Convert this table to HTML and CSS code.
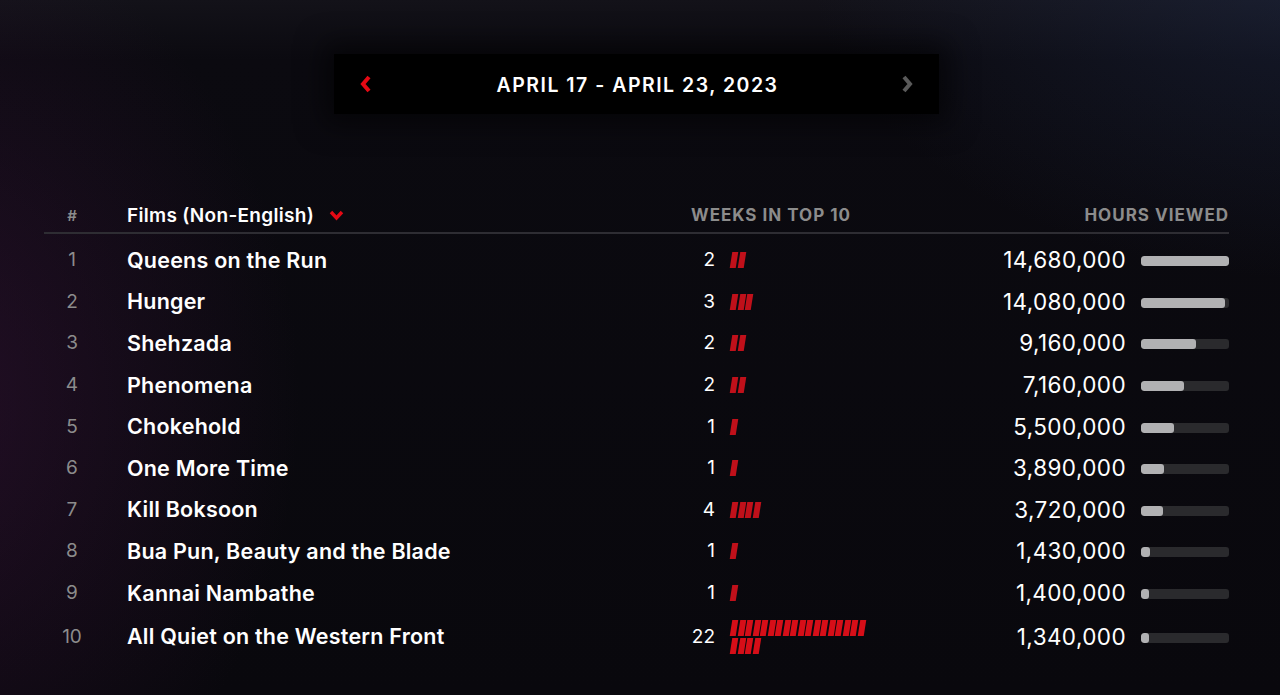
FILE: index.html
```html
<!DOCTYPE html>
<html lang="en">
<head>
<meta charset="utf-8">
<title>Top 10 Films (Non-English)</title>
<link rel="stylesheet" href="styles.css">
</head>
<body>
<main class="page">
  <div class="week-nav">
    <button class="nav-btn prev" aria-label="Previous week">
      <svg width="14" height="18" viewBox="0 0 14 18"><polyline points="10,2 4,9 10,16" fill="none" stroke="#e50914" stroke-width="4"/></svg>
    </button>
    <div class="week-label">APRIL 17 - APRIL 23, 2023</div>
    <button class="nav-btn next" aria-label="Next week">
      <svg width="14" height="18" viewBox="0 0 14 18"><polyline points="4,2 10,9 4,16" fill="none" stroke="#5a5a5a" stroke-width="4"/></svg>
    </button>
  </div>

  <section class="table">
    <div class="row head">
      <div class="rank">#</div>
      <div class="title">Films (Non-English)
        <svg class="caret" width="15" height="11" viewBox="0 0 15 11"><polyline points="2,2 7.5,8 13,2" fill="none" stroke="#e50914" stroke-width="3.4"/></svg>
      </div>
      <div class="weeks label">WEEKS IN TOP 10</div>
      <div class="hours label">HOURS VIEWED</div>
    </div>

    <div class="row">
      <div class="rank">1</div>
      <div class="title">Queens on the Run</div>
      <div class="weeks"><span class="wnum">2</span><span class="segs"><i></i><i></i></span></div>
      <div class="hours"><span class="hnum">14,680,000</span><span class="track"><span class="fill" style="width:100%"></span></span></div>
    </div>
    <div class="row">
      <div class="rank">2</div>
      <div class="title">Hunger</div>
      <div class="weeks"><span class="wnum">3</span><span class="segs"><i></i><i></i><i></i></span></div>
      <div class="hours"><span class="hnum">14,080,000</span><span class="track"><span class="fill" style="width:95.9%"></span></span></div>
    </div>
    <div class="row">
      <div class="rank">3</div>
      <div class="title">Shehzada</div>
      <div class="weeks"><span class="wnum">2</span><span class="segs"><i></i><i></i></span></div>
      <div class="hours"><span class="hnum">9,160,000</span><span class="track"><span class="fill" style="width:62.4%"></span></span></div>
    </div>
    <div class="row">
      <div class="rank">4</div>
      <div class="title">Phenomena</div>
      <div class="weeks"><span class="wnum">2</span><span class="segs"><i></i><i></i></span></div>
      <div class="hours"><span class="hnum">7,160,000</span><span class="track"><span class="fill" style="width:48.8%"></span></span></div>
    </div>
    <div class="row">
      <div class="rank">5</div>
      <div class="title">Chokehold</div>
      <div class="weeks"><span class="wnum">1</span><span class="segs"><i></i></span></div>
      <div class="hours"><span class="hnum">5,500,000</span><span class="track"><span class="fill" style="width:37.5%"></span></span></div>
    </div>
    <div class="row">
      <div class="rank">6</div>
      <div class="title">One More Time</div>
      <div class="weeks"><span class="wnum">1</span><span class="segs"><i></i></span></div>
      <div class="hours"><span class="hnum">3,890,000</span><span class="track"><span class="fill" style="width:26.5%"></span></span></div>
    </div>
    <div class="row">
      <div class="rank">7</div>
      <div class="title">Kill Boksoon</div>
      <div class="weeks"><span class="wnum">4</span><span class="segs"><i></i><i></i><i></i><i></i></span></div>
      <div class="hours"><span class="hnum">3,720,000</span><span class="track"><span class="fill" style="width:25.3%"></span></span></div>
    </div>
    <div class="row">
      <div class="rank">8</div>
      <div class="title">Bua Pun, Beauty and the Blade</div>
      <div class="weeks"><span class="wnum">1</span><span class="segs"><i></i></span></div>
      <div class="hours"><span class="hnum">1,430,000</span><span class="track"><span class="fill" style="width:9.7%"></span></span></div>
    </div>
    <div class="row">
      <div class="rank">9</div>
      <div class="title">Kannai Nambathe</div>
      <div class="weeks"><span class="wnum">1</span><span class="segs"><i></i></span></div>
      <div class="hours"><span class="hnum">1,400,000</span><span class="track"><span class="fill" style="width:9.5%"></span></span></div>
    </div>
    <div class="row tall">
      <div class="rank">10</div>
      <div class="title">All Quiet on the Western Front</div>
      <div class="weeks"><span class="wnum">22</span><span class="segs bright"><i></i><i></i><i></i><i></i><i></i><i></i><i></i><i></i><i></i><i></i><i></i><i></i><i></i><i></i><i></i><i></i><i></i><i></i><i></i><i></i><i></i><i></i></span></div>
      <div class="hours"><span class="hnum">1,340,000</span><span class="track"><span class="fill" style="width:9.1%"></span></span></div>
    </div>
  </section>
</main>
</body>
</html>
```

FILE: styles.css
```css
* { box-sizing: border-box; }

html, body { height: 100%; }

body {
  margin: 0;
  color: #fff;
  font-family: Inter, "Noto Sans", "Liberation Sans", sans-serif;
  background:
    radial-gradient(ellipse 380px 480px at -80px 400px, rgba(70, 22, 70, 0.42), rgba(70, 22, 70, 0) 100%),
    radial-gradient(ellipse 520px 320px at 1330px -40px, rgba(35, 48, 80, 0.45), rgba(35, 48, 80, 0) 100%),
    linear-gradient(180deg, #131219 0px, #0b0a10 60px, #09080d 100%);
  overflow: hidden;
}

.page {
  padding: 54px 51px 0 44px;
  display: flex;
  flex-direction: column;
  align-items: stretch;
}

/* week navigator */
.week-nav {
  align-self: center;
  width: 605px;
  height: 60px;
  background: #000;
  display: flex;
  align-items: center;
  justify-content: space-between;
  padding: 0 20px;
  box-shadow: 0 0 28px 10px rgba(0, 0, 0, 0.55);
}

.nav-btn {
  width: 24px;
  height: 24px;
  padding: 0;
  border: 0;
  background: none;
  display: flex;
  align-items: center;
  justify-content: center;
}

.week-label {
  font-size: 19.5px;
  font-weight: 600;
  letter-spacing: 1.5px;
  padding-left: 2px;
  margin-top: 2px;
}

/* table */
.table {
  margin-top: 84px;
  display: flex;
  flex-direction: column;
}

.row {
  display: grid;
  grid-template-columns: 83px 564px 220px 1fr;
  align-items: center;
  height: 41.6px;
}

.row.head {
  height: 36px;
  border-bottom: 2px solid #2e2d33;
  margin-bottom: 5px;
}

.row.tall {
  height: 46px;
}

.rank {
  width: 56px;
  text-align: center;
  color: #8c8c8c;
  font-size: 19px;
  font-weight: 400;
}

.head .rank {
  font-size: 15px;
  font-weight: 600;
}

.title {
  font-size: 21.5px;
  font-weight: 600;
  letter-spacing: 0.22px;
  display: flex;
  align-items: center;
}

.head .title {
  font-size: 19px;
  font-weight: 600;
  letter-spacing: 0.3px;
}

.caret {
  margin-left: 15px;
  margin-top: 1px;
}

.label {
  color: #8c8c8c;
  font-size: 17px;
  font-weight: 700;
  letter-spacing: 1px;
}

.weeks {
  display: flex;
  align-items: center;
}

.wnum {
  width: 24px;
  text-align: right;
  font-size: 19px;
  font-weight: 400;
  margin-right: 16px;
}

.segs {
  display: flex;
  flex-wrap: wrap;
  gap: 2px 1.5px;
  max-width: 136px;
  margin-top: 1px;
}

.segs i {
  display: block;
  width: 6px;
  height: 16px;
  background: #c0101a;
  transform: skewX(-9deg);
}

.segs.bright i {
  background: #d60e18;
}

.hours {
  display: flex;
  align-items: center;
  justify-content: flex-end;
}

.hnum {
  font-size: 22.5px;
  font-weight: 400;
  letter-spacing: 0.4px;
  margin-right: 15px;
}

.track {
  width: 88px;
  height: 10px;
  border-radius: 3px;
  background: #2a2a2d;
  margin-top: 3px;
  overflow: hidden;
  display: block;
}

.fill {
  display: block;
  height: 100%;
  min-width: 8px;
  border-radius: 3px;
  background: #b1b1b3;
}
```
